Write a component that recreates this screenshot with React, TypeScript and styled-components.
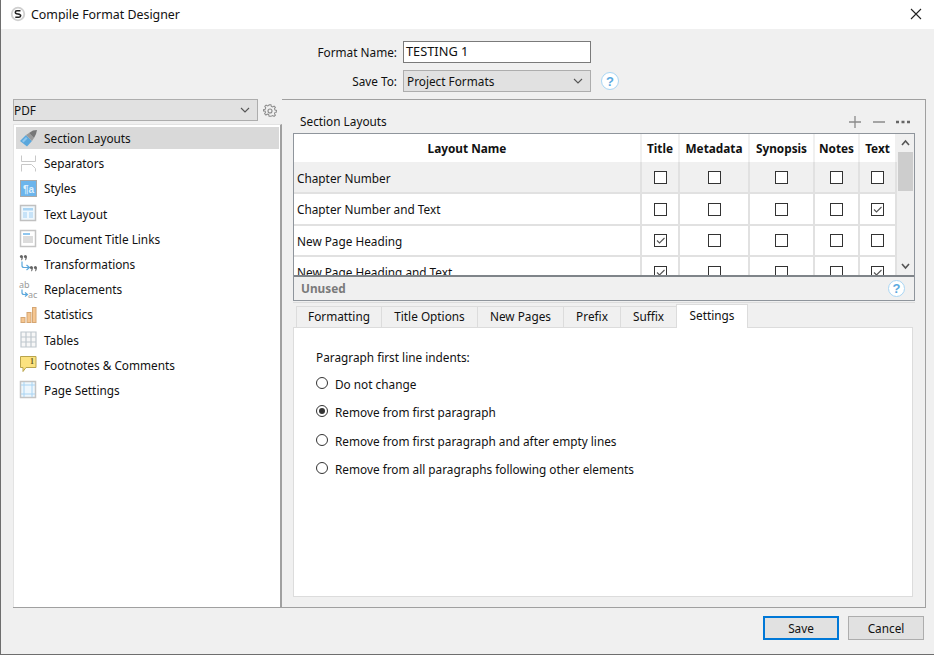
import React from 'react';
import styled, { createGlobalStyle } from 'styled-components';

const GlobalStyle = createGlobalStyle`
  html, body { margin: 0; padding: 0; background: #f0f0f0; }
  body { font-family: "Noto Sans", "Open Sans", "Liberation Sans", sans-serif; font-size: 11.8px; color: #111; overflow: hidden; }
  * { box-sizing: border-box; }
`;

const Window = styled.div`
  width: 934px;
  height: 655px;
  display: flex;
  flex-direction: column;
  background: #f0f0f0;
  border-left: 1px solid #6e6e6e;
  border-bottom: 1px solid #6e6e6e;
`;

const TitleBar = styled.div`
  height: 29px;
  flex: none;
  background: #fff;
  display: flex;
  align-items: center;
  padding: 0 12px 1px 9px;
  gap: 5px;
  font-size: 12.4px;
`;

const TitleText = styled.span`
  flex: 1;
`;

const CloseButton = styled.svg`
  width: 12px;
  height: 12px;
`;

const FormHeader = styled.div`
  height: 70px;
  flex: none;
  padding-top: 12px;
  display: grid;
  grid-template-columns: 396px 188px 32px;
  grid-auto-rows: 22px;
  row-gap: 7px;
  align-items: center;
  column-gap: 6px;
`;

const FieldLabel = styled.label`
  text-align: right;
`;

const TextInput = styled.div`
  height: 22px;
  border: 1px solid #7a7a7a;
  background: #fff;
  padding: 0 2px;
  line-height: 19px;
  font-size: 12.8px;
`;

const Select = styled.div<{ $width?: number; $inset?: number }>`
  height: 22px;
  width: ${(p) => (p.$width ? `${p.$width}px` : 'auto')};
  border: 1px solid #adadad;
  background: #e1e1e1;
  padding: 0 7px 0 ${(p) => p.$inset ?? 3}px;
  display: flex;
  align-items: center;
  justify-content: space-between;
`;

const HelpIcon = styled.span<{ $size: number; $shift?: number }>`
  width: ${(p) => p.$size}px;
  height: ${(p) => p.$size}px;
  margin-left: ${(p) => p.$shift ?? 0}px;
  border-radius: 50%;
  border: 1.5px solid #a9d6f4;
  background: #fff;
  color: #5aa9e0;
  display: flex;
  align-items: center;
  justify-content: center;
  font-family: "Liberation Sans", sans-serif;
  font-size: 13px;
  font-weight: 700;
  line-height: 1;
`;

const Main = styled.div`
  height: 509px;
  flex: none;
  margin: 0 8px 0 12px;
  display: flex;
  border-bottom: 1px solid #a0a0a0;
`;

const LeftPane = styled.div`
  width: 269px;
  flex: none;
  display: flex;
  flex-direction: column;
`;

const LeftTop = styled.div`
  display: flex;
  align-items: center;
  gap: 4px;
  height: 22px;
  flex: none;
`;

const GearIcon = styled.svg`
  width: 14px;
  height: 14px;
  margin-left: 1px;
  margin-top: 1px;
`;

const SideList = styled.div`
  flex: 1;
  margin-top: 3px;
  background: #fff;
  border-top: 1px solid #e3e3e3;
  border-left: 1px solid #e3e3e3;
  border-right: 2px solid #a0a0a0;
  padding: 2px 1px 0 2px;
  display: flex;
  flex-direction: column;
  gap: 3.2px;
`;

const SideItem = styled.div<{ $active?: boolean }>`
  height: 22px;
  flex: none;
  display: flex;
  align-items: center;
  gap: 6px;
  padding-left: 3px;
  background: ${(p) => (p.$active ? '#d9d9d9' : 'transparent')};
`;

const SideIcon = styled.svg`
  width: 19px;
  height: 19px;
  flex: none;
  overflow: visible;
`;

const RightPane = styled.div`
  flex: 1;
  display: flex;
  flex-direction: column;
  border-top: 1px solid #a0a0a0;
  border-right: 1px solid #a0a0a0;
  padding: 0 10px 10px 11px;
`;

const SectionBar = styled.div`
  height: 33px;
  flex: none;
  display: flex;
  align-items: center;
  justify-content: space-between;
  padding: 8px 3px 0 7px;
`;

const BarIcons = styled.svg`
  width: 64px;
  height: 12px;
  margin-top: 2px;
`;

const TableBox = styled.div`
  height: 168px;
  flex: none;
  width: 622px;
  border: 1px solid #8f959c;
  display: flex;
  flex-direction: column;
`;

const TableArea = styled.div`
  height: 143px;
  flex: none;
  display: flex;
  overflow: hidden;
  border-bottom: 2px solid #7f8489;
`;

const Grid = styled.div`
  width: 603px;
  flex: none;
  display: grid;
  grid-template-columns: 348px 38px 70px 65px 45px 37px;
  grid-template-rows: 28px 32px 32px 31px 32px;
`;

const HeadCell = styled.div`
  display: flex;
  align-items: center;
  justify-content: center;
  background: #fff;
  font-weight: 700;
  border-right: 2px solid #f0f0f0;
  &:last-child { border-right: none; }
`;

const NameCell = styled.div<{ $shade?: boolean }>`
  display: flex;
  align-items: center;
  padding-left: 3px;
  padding-top: ${(p) => (p.$shade ? 1 : 0)}px;
  background: ${(p) => (p.$shade ? '#f0f0f0' : '#fff')};
  border-bottom: 2px solid #e1e1e1;
  border-right: 2px solid #e1e1e1;
`;

const BoxCell = styled.div<{ $shade?: boolean }>`
  display: flex;
  align-items: center;
  justify-content: center;
  background: ${(p) => (p.$shade ? '#f0f0f0' : '#fff')};
  border-bottom: 2px solid #e1e1e1;
  border-right: 2px solid #e1e1e1;
`;

const Check = styled.span`
  width: 13px;
  height: 13px;
  display: block;
  border: 1px solid #333;
  background: #fff;
`;

const CheckMark = styled.svg`
  display: block;
  width: 11px;
  height: 11px;
`;

const ScrollBar = styled.div`
  flex: 1;
  background: #f0f0f0;
  display: flex;
  flex-direction: column;
  align-items: center;
  justify-content: space-between;
  position: relative;
  padding: 5px 0;
`;

const Chevron = styled.svg`
  width: 9px;
  height: 7px;
`;

const ScrollThumb = styled.div`
  position: absolute;
  top: 18px;
  left: 1px;
  right: 1px;
  height: 39px;
  background: #cdcdcd;
`;

const UnusedBar = styled.div`
  flex: 1;
  display: flex;
  align-items: center;
  justify-content: space-between;
  padding: 0 9px 0 7px;
  color: #7a7a7a;
  font-weight: 700;
`;

const UnusedLabel = styled.span`
  margin-top: -2px;
`;

const TabStrip = styled.div`
  height: 26px;
  flex: none;
  margin-top: 1px;
  border-top: 1px solid #dcdcdc;
  display: flex;
  align-items: flex-end;
  padding-left: 3px;
  width: 622px;
`;

const Tab = styled.div<{ $active?: boolean; $w: number }>`
  width: ${(p) => p.$w}px;
  height: ${(p) => (p.$active ? 24 : 22)}px;
  border: 1px solid #dcdcdc;
  border-bottom: ${(p) => (p.$active ? 'none' : '1px solid #dcdcdc')};
  margin-right: -1px;
  background: ${(p) => (p.$active ? '#fff' : '#f0f0f0')};
  display: flex;
  align-items: center;
  justify-content: center;
  padding-bottom: 3px;
  position: relative;
  z-index: ${(p) => (p.$active ? 1 : 0)};
`;

const TabBody = styled.div`
  flex: 1;
  width: 620px;
  background: #fff;
  border: 1px solid #dcdcdc;
  margin-top: -1px;
  padding: 20px 22px;
`;

const OptionTitle = styled.div`
  height: 18px;
  line-height: 18px;
  margin-bottom: 9px;
`;

const OptionRow = styled.div`
  height: 18px;
  margin-bottom: 10.3px;
  display: flex;
  align-items: center;
  gap: 7px;
`;

const Radio = styled.span<{ $on?: boolean }>`
  width: 12px;
  height: 12px;
  flex: none;
  border-radius: 50%;
  border: 1px solid #333;
  background: #fff;
  display: flex;
  align-items: center;
  justify-content: center;
  margin-top: -2px;
  &::after {
    content: '';
    display: ${(p) => (p.$on ? 'block' : 'none')};
    width: 6px;
    height: 6px;
    border-radius: 50%;
    background: #333;
  }
`;

const Footer = styled.div`
  flex: 1;
  display: flex;
  justify-content: flex-end;
  gap: 9px;
  padding: 8px 10px 0 0;
`;

const Button = styled.button<{ $primary?: boolean }>`
  width: 76px;
  height: 24px;
  font: inherit;
  color: #111;
  padding: 0;
  background: #e1e1e1;
  border: ${(p) => (p.$primary ? '2px solid #0078d7' : '1px solid #adadad')};
`;

const items = [
  'Section Layouts', 'Separators', 'Styles', 'Text Layout', 'Document Title Links', 'Transformations',
  'Replacements', 'Statistics', 'Tables', 'Footnotes & Comments', 'Page Settings',
];

const columns = ['Layout Name', 'Title', 'Metadata', 'Synopsis', 'Notes', 'Text'];

const rows: { name: string; checks: boolean[]; shade?: boolean }[] = [
  { name: 'Chapter Number', checks: [false, false, false, false, false], shade: true },
  { name: 'Chapter Number and Text', checks: [false, false, false, false, true] },
  { name: 'New Page Heading', checks: [true, false, false, false, false] },
  { name: 'New Page Heading and Text', checks: [true, false, false, false, true] },
];

const tabs: [string, number][] = [
  ['Formatting', 86], ['Title Options', 97], ['New Pages', 87], ['Prefix', 58], ['Suffix', 57], ['Settings', 72],
];

const options = [
  'Do not change', 'Remove from first paragraph', 'Remove from first paragraph and after empty lines',
  'Remove from all paragraphs following other elements',
];

const Arrow = () => (
  <svg width="10" height="6" viewBox="0 0 10 6" fill="none" stroke="#555" strokeWidth="1.1"><path d="M1 1l4 4 4-4" /></svg>
);

const Quote = ({ x, y }: { x: number; y: number }) => (
  <g fill="#666">
    <circle cx={x + 1.4} cy={y + 1.5} r={1.5} />
    <path d={`M${x + 1.6} ${y + 1.5}h1.300q0 2.200-1 3.700h-.7z`} />
  </g>
);

const Icon = ({ index }: { index: number }) => {
  const art = [
    <>
      <path d="M1 12l6-6 6 6-5 5.500z" fill="#5aa7dc" />
      <path d="M3 12l4-4 1.500 1.500-4 4z" fill="#8cc6ee" />
      <path d="M7 6l3-2 5 5-2 3z" fill="#9a9a9a" />
      <path d="M10 4l4-2.500 4-.5-1 4-2 4z" fill="#777" />
    </>,
    <>
      <path d="M2.500 1.500v6h14v-6" fill="none" stroke="#c8c8c8" />
      <path d="M2.500 17.500v-7h10l4 4v3" fill="none" stroke="#c8c8c8" />
    </>,
    <>
      <rect x="1.500" y="1.500" width="16" height="16" fill="#6cb5ec" stroke="#a9a9a9" />
      <text x="9.500" y="13.500" textAnchor="middle" fontSize="10" fontWeight="700" fill="#dff0fc" fontFamily="Liberation Sans">¶a</text>
    </>,
    <>
      <rect x="1.500" y="1.500" width="15" height="15" fill="#eef7fd" stroke="#c0c0c0" strokeWidth="1.500" />
      <rect x="4" y="4" width="10" height="2.500" fill="#a9d4f3" />
      <rect x="4" y="8" width="4" height="6" fill="#c7e3f8" />
      <rect x="10" y="8" width="4" height="6" fill="#c7e3f8" />
    </>,
    <>
      <rect x="1.500" y="1.500" width="15" height="16" fill="#fff" stroke="#c4c4c4" strokeWidth="1.500" />
      <rect x="4" y="4" width="7" height="2" fill="#8fc6ee" />
      <rect x="4" y="7" width="10" height="7" fill="#dcdcdc" />
    </>,
    <>
      <Quote x={1} y={1} />
      <Quote x={5} y={1} />
      <path d="M3 7.500v4q0 2 2 2h5M7.500 11l3 2.500-3 2.500" fill="none" stroke="#5aa7dc" strokeWidth="1.200" />
      <Quote x={11} y={12} />
      <Quote x={15} y={12} />
    </>,
    <>
      <text x="0" y="7.500" fontSize="9" fill="#9a9a9a" fontFamily="Noto Sans">ab</text>
      <path d="M3 9.500v3q0 2 2 2h3M6 12.500l2.500 2-2.500 2" fill="none" stroke="#5aa7dc" strokeWidth="1.200" />
      <text x="9" y="17.500" fontSize="9" fill="#9a9a9a" fontFamily="Noto Sans">ac</text>
    </>,
    <>
      <rect x="2" y="12.500" width="4" height="5" fill="#f5c691" stroke="#d5a673" />
      <rect x="8" y="7.500" width="4" height="10" fill="#f5c691" stroke="#d5a673" />
      <rect x="13.500" y="2.500" width="3.500" height="15" fill="#f5c691" stroke="#d5a673" />
    </>,
    <path d="M2 2h15v15H2zM7 2v15M12 2v15M2 7h15M2 12h15" fill="#f7f7f7" stroke="#bfc7ce" strokeWidth="1.200" />,
    <>
      <path d="M1.500 1.500h15.500v11H7l-3 4v-4H1.500z" fill="#fbe27f" stroke="#b9a44c" />
      <text x="13" y="9" textAnchor="middle" fontSize="8" fontWeight="700" fill="#6b5f25" fontFamily="Liberation Serif">1</text>
    </>,
    <>
      <rect x="1.500" y="1.500" width="15" height="16" fill="#eef7fd" stroke="#c4c4c4" strokeWidth="1.500" />
      <path d="M5 2v15M13 2v15M2 5h14M2 14h14" fill="none" stroke="#a9d4f3" />
    </>,
  ];
  return <SideIcon viewBox="0 0 19 19">{art[index]}</SideIcon>;
};

export default function App() {
  return (
    <Window>
      <GlobalStyle />
      <TitleBar>
        <svg width="16" height="16" viewBox="0 0 16 16">
          <circle cx="8" cy="8" r="7.200" fill="#cfcfcf" />
          <circle cx="8" cy="8" r="5.400" fill="#fff" />
          <path d="M10.500 4.800H7Q5.300 4.800 5.300 6.200T8 8t2.700 1.800T9 11.200H5.300" fill="none" stroke="#222" strokeWidth="1.500" />
        </svg>
        <TitleText>Compile Format Designer</TitleText>
        <CloseButton viewBox="0 0 12 12"><path d="M1 1l10 10M11 1L1 11" stroke="#222" strokeWidth="1.100" /></CloseButton>
      </TitleBar>
      <FormHeader>
        <FieldLabel>Format Name:</FieldLabel>
        <TextInput>TESTING 1</TextInput>
        <span />
        <FieldLabel>Save To:</FieldLabel>
        <Select>Project Formats<Arrow /></Select>
        <HelpIcon $size={18} $shift={4}>?</HelpIcon>
      </FormHeader>
      <Main>
        <LeftPane>
          <LeftTop>
            <Select $width={245} $inset={0}>PDF<Arrow /></Select>
            <GearIcon viewBox="0 0 14 14" fill="none" stroke="#8a8a8a" strokeWidth="1.100">
              <path d="M6 1h2l.4 1.800 1.400.6 1.600-1 1.400 1.400-1 1.600.6 1.400 1.800.4v1.600l-1.800.4-.6 1.400 1 1.600-1.400 1.400-1.600-1-1.400.6L8 13.500H6l-.4-1.800-1.400-.6-1.600 1-1.400-1.400 1-1.600-.6-1.400L0 7.800V6.200l1.800-.4.6-1.400-1-1.600 1.400-1.400 1.600 1 1.400-.6z" transform="translate(.5 -.2) scale(.93)" />
              <circle cx="7" cy="7" r="2" />
            </GearIcon>
          </LeftTop>
          <SideList>
            {items.map((name, i) => (
              <SideItem key={name} $active={i === 0}>
                <Icon index={i} />
                {name}
              </SideItem>
            ))}
          </SideList>
        </LeftPane>
        <RightPane>
          <SectionBar>
            Section Layouts
            <BarIcons viewBox="0 0 64 12" fill="none" stroke="#8a8a8a" strokeWidth="1.300">
              <path d="M1 6h12M7 0v12M25 6h12" />
              <path d="M48 6h3M53.500 6h3M59 6h3" strokeWidth="2.400" stroke="#666" />
            </BarIcons>
          </SectionBar>
          <TableBox>
            <TableArea>
              <Grid>
                {columns.map((c) => <HeadCell key={c}>{c}</HeadCell>)}
                {rows.map((r) => (
                  <React.Fragment key={r.name}>
                    <NameCell $shade={r.shade}>{r.name}</NameCell>
                    {r.checks.map((on, i) => (
                      <BoxCell key={i} $shade={r.shade}>
                        <Check>
                          {on && (
                            <CheckMark viewBox="0 0 11 11" fill="none" stroke="#555" strokeWidth="1.100">
                              <path d="M2 5.500l2.500 2.500L9.500 3" />
                            </CheckMark>
                          )}
                        </Check>
                      </BoxCell>
                    ))}
                  </React.Fragment>
                ))}
              </Grid>
              <ScrollBar>
                <ScrollThumb />
                <Chevron viewBox="0 0 9 7" fill="none" stroke="#555" strokeWidth="1.600"><path d="M1 6l3.500-4L8 6" /></Chevron>
                <Chevron viewBox="0 0 9 7" fill="none" stroke="#555" strokeWidth="1.600"><path d="M1 1l3.500 4L8 1" /></Chevron>
              </ScrollBar>
            </TableArea>
            <UnusedBar>
              <UnusedLabel>Unused</UnusedLabel>
              <HelpIcon $size={17}>?</HelpIcon>
            </UnusedBar>
          </TableBox>
          <TabStrip>
            {tabs.map(([label, w]) => (
              <Tab key={label} $w={w} $active={label === 'Settings'}>{label}</Tab>
            ))}
          </TabStrip>
          <TabBody>
            <OptionTitle>Paragraph first line indents:</OptionTitle>
            {options.map((o, i) => (
              <OptionRow key={o}>
                <Radio $on={i === 1} />
                {o}
              </OptionRow>
            ))}
          </TabBody>
        </RightPane>
      </Main>
      <Footer>
        <Button $primary>Save</Button>
        <Button>Cancel</Button>
      </Footer>
    </Window>
  );
}
